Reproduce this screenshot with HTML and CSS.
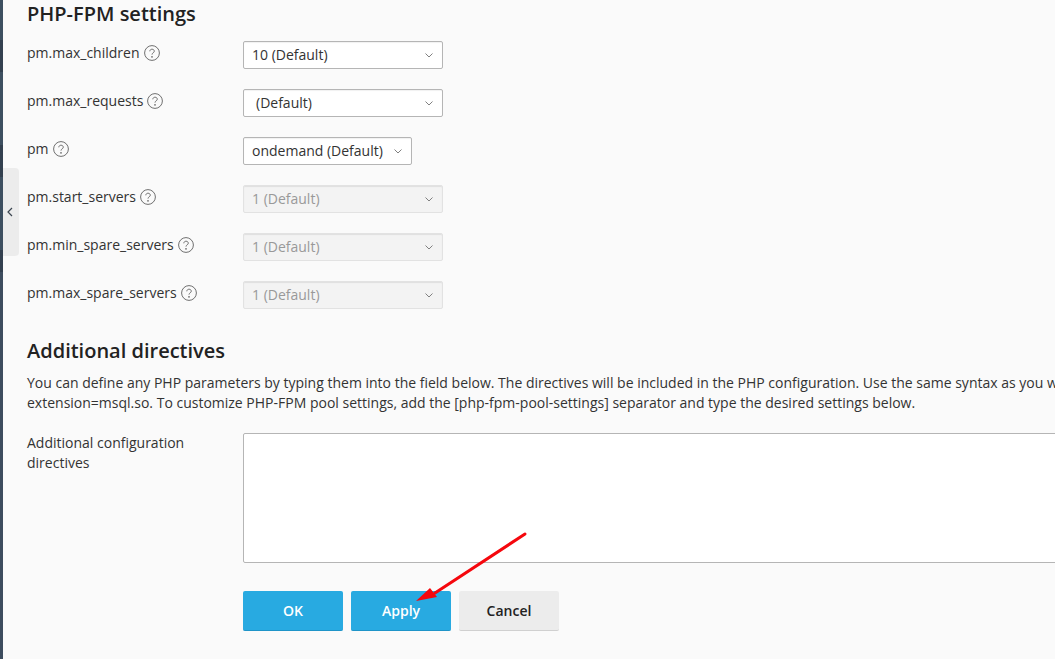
FILE: index.html
```html
<!DOCTYPE html>
<html lang="en">
<head>
<meta charset="utf-8">
<title>PHP-FPM settings</title>
<link rel="stylesheet" href="styles.css">
</head>
<body>
<div class="page">
  <div class="stripe"></div>
  <button class="collapse" type="button" aria-label="Collapse">
    <svg width="6" height="10" viewBox="0 0 6 10"><path d="M5 1 1 5l4 4" fill="none" stroke="#3c4650" stroke-width="1.2"/></svg>
  </button>
  <main class="content">
    <h2 class="title first">PHP-FPM settings</h2>

    <div class="row">
      <div class="label">pm.max_children <svg class="help" viewBox="0 0 16 16"><circle cx="8" cy="8" r="7.400" /><path d="M5.800 6.300C5.800 5 6.900 4.200 8 4.200c1.300 0 2.300.8 2.300 2 0 1.600-2.300 1.700-2.300 3.400" /><circle class="dot" cx="8" cy="11.800" r=".9"/></svg></div>
      <div class="select"><span>10 (Default)</span><svg class="chev" viewBox="0 0 8 5"><path d="M.5.5 4 4 7.500.5"/></svg></div>
    </div>
    <div class="row">
      <div class="label">pm.max_requests <svg class="help" viewBox="0 0 16 16"><circle cx="8" cy="8" r="7.400" /><path d="M5.800 6.300C5.800 5 6.900 4.200 8 4.200c1.300 0 2.300.8 2.300 2 0 1.600-2.300 1.700-2.300 3.400" /><circle class="dot" cx="8" cy="11.800" r=".9"/></svg></div>
      <div class="select blank"><span>(Default)</span><svg class="chev" viewBox="0 0 8 5"><path d="M.5.5 4 4 7.500.5"/></svg></div>
    </div>
    <div class="row">
      <div class="label">pm <svg class="help" viewBox="0 0 16 16"><circle cx="8" cy="8" r="7.400" /><path d="M5.800 6.300C5.800 5 6.900 4.200 8 4.200c1.300 0 2.300.8 2.300 2 0 1.600-2.300 1.700-2.300 3.400" /><circle class="dot" cx="8" cy="11.800" r=".9"/></svg></div>
      <div class="select narrow"><span>ondemand (Default)</span><svg class="chev" viewBox="0 0 8 5"><path d="M.5.5 4 4 7.500.5"/></svg></div>
    </div>
    <div class="row">
      <div class="label">pm.start_servers <svg class="help" viewBox="0 0 16 16"><circle cx="8" cy="8" r="7.400" /><path d="M5.800 6.300C5.800 5 6.900 4.200 8 4.200c1.300 0 2.300.8 2.300 2 0 1.600-2.300 1.700-2.300 3.400" /><circle class="dot" cx="8" cy="11.800" r=".9"/></svg></div>
      <div class="select disabled"><span>1 (Default)</span><svg class="chev" viewBox="0 0 8 5"><path d="M.5.5 4 4 7.500.5"/></svg></div>
    </div>
    <div class="row">
      <div class="label">pm.min_spare_servers <svg class="help" viewBox="0 0 16 16"><circle cx="8" cy="8" r="7.400" /><path d="M5.800 6.300C5.800 5 6.900 4.200 8 4.200c1.300 0 2.300.8 2.300 2 0 1.600-2.300 1.700-2.300 3.400" /><circle class="dot" cx="8" cy="11.800" r=".9"/></svg></div>
      <div class="select disabled"><span>1 (Default)</span><svg class="chev" viewBox="0 0 8 5"><path d="M.5.5 4 4 7.500.5"/></svg></div>
    </div>
    <div class="row">
      <div class="label">pm.max_spare_servers <svg class="help" viewBox="0 0 16 16"><circle cx="8" cy="8" r="7.400" /><path d="M5.800 6.300C5.800 5 6.900 4.200 8 4.200c1.300 0 2.300.8 2.300 2 0 1.600-2.300 1.700-2.300 3.400" /><circle class="dot" cx="8" cy="11.800" r=".9"/></svg></div>
      <div class="select disabled"><span>1 (Default)</span><svg class="chev" viewBox="0 0 8 5"><path d="M.5.5 4 4 7.500.5"/></svg></div>
    </div>

    <h2 class="title second">Additional directives</h2>
    <p class="hint">You can define any PHP parameters by typing them into the field below. The directives will be included in the PHP configuration. Use the same syntax as you would use in php.ini.</p>
    <p class="hint">extension=msql.so. To customize PHP-FPM pool settings, add the [php-fpm-pool-settings] separator and type the desired settings below.</p>

    <div class="row area-row">
      <div class="label wrap">Additional configuration directives</div>
      <div class="area"></div>
    </div>

    <div class="actions">
      <button class="btn primary" type="button">OK</button>
      <button class="btn primary" type="button">Apply</button>
      <button class="btn" type="button">Cancel</button>
    </div>
  </main>
  <svg class="arrow" width="120" height="80" viewBox="0 0 120 80">
    <path d="M112 4 22 63" fill="none" stroke="#f5070d" stroke-width="3" stroke-linecap="round"/>
    <path d="M3 71 17 58 24 67Z" fill="#f5070d"/>
  </svg>
</div>
</body>
</html>
```

FILE: styles.css
```css
* { box-sizing: border-box; }
html, body { margin: 0; height: 100%; overflow: hidden; }
body {
  background: #fafafa;
  color: #222;
  font: 14px/20px "Open Sans", sans-serif;
}
.page { position: relative; display: flex; height: 659px; overflow: hidden; }
.stripe {
  flex: 0 0 3px;
  background: linear-gradient(#3d4f60 0 40px, #33404f 40px 72px, #3d4f60 72px 145px, #33404f 145px 177px, #3d4f60 177px 250px, #33404f 250px 272px, #3d4c5e 272px);
}
.collapse {
  position: absolute; left: 3px; top: 168px;
  width: 16px; height: 88px; padding: 0 3px 0 0;
  display: flex; align-items: center; justify-content: center;
  background: #ececec; border: 0; border-radius: 0 4px 4px 0;
}
.content { flex: 1; min-width: 0; padding-left: 24px; }
.title { margin: 0; font-size: 20px; line-height: 24px; font-weight: 600; color: #222; white-space: nowrap; }
.title.first { margin-top: 2px; margin-bottom: 15px; }
.title.second { margin-top: 30px; margin-bottom: 10px; }
.row { display: flex; align-items: flex-start; height: 28px; margin-bottom: 20px; }
.label { flex: 0 0 216px; color: #333; white-space: nowrap; display: flex; align-items: center; gap: 4px; height: 24px; }
.label.wrap { white-space: normal; display: block; height: auto; width: 216px; padding-right: 40px; }
.help { width: 16px; height: 16px; fill: none; stroke: #6f6f6f; stroke-width: 1; flex: none; }
.help .dot { fill: #6f6f6f; stroke: none; }
.select {
  width: 200px; height: 28px; padding: 0 8px;
  display: flex; align-items: center; justify-content: space-between;
  background: #fff; border: 1px solid #b5b5b5; border-radius: 2px; color: #333;
  box-shadow: inset 0 1px 1px rgba(0, 0, 0, .06);
}
.select.blank span { padding-left: 4px; }
.select.narrow { width: 169px; }
.select.disabled { background: #f3f3f3; border-color: #e2e2e2; color: #999; box-shadow: inset 0 1px 1px rgba(0, 0, 0, .08); }
.chev { width: 8px; height: 5px; margin-right: 1px; fill: none; stroke: #808080; stroke-width: 1; }
.hint { margin: 0; white-space: nowrap; color: #333; }
.area-row { height: 130px; margin-top: 20px; margin-bottom: 28px; }
.area { flex: 0 0 900px; height: 130px; background: #fff; border: 1px solid #b5b5b5; border-radius: 2px; }
.actions { display: flex; gap: 8px; padding-left: 216px; }
.btn {
  width: 100px; height: 40px; padding: 0;
  font: 600 14px/20px "Open Sans", sans-serif; color: #222;
  background: #ececec; border: 0; border-bottom: 1px solid #d0d0d0; border-radius: 2px;
}
.btn.primary { background: #28aae1; border-bottom-color: #1f94c8; color: #fff; }
.arrow { position: absolute; left: 413px; top: 530px; }
```
